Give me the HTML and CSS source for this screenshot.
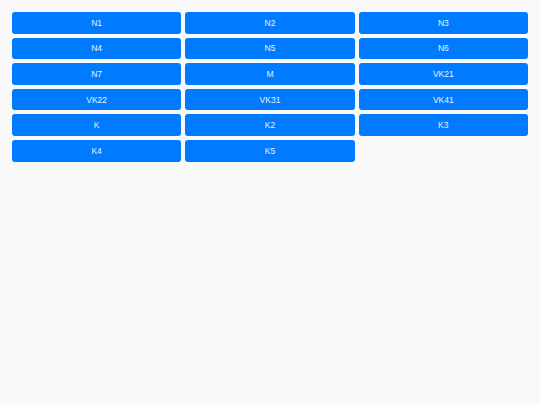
FILE: index.html
```html
<!DOCTYPE html>
<html>
<head>
<meta charset="utf-8">
<link rel="stylesheet" href="styles.css">
</head>
<body>
<div class="grid">
  <button class="btn">N1</button>
  <button class="btn">N2</button>
  <button class="btn">N3</button>
  <button class="btn">N4</button>
  <button class="btn">N5</button>
  <button class="btn">N6</button>
  <button class="btn">N7</button>
  <button class="btn">M</button>
  <button class="btn">VK21</button>
  <button class="btn">VK22</button>
  <button class="btn">VK31</button>
  <button class="btn">VK41</button>
  <button class="btn">K</button>
  <button class="btn">K2</button>
  <button class="btn">K3</button>
  <button class="btn">K4</button>
  <button class="btn">K5</button>
</div>
</body>
</html>
```
FILE: styles.css
```css
html, body {
  margin: 0;
  padding: 0;
  background: #f9f9f9;
  font-family: "Liberation Sans", Arial, sans-serif;
}
.grid {
  display: grid;
  grid-template-columns: repeat(3, 1fr);
  gap: 4px;
  padding: 12px;
}
.btn {
  height: 21.6px;
  border: none;
  border-radius: 3px;
  background: #007bff;
  color: #e8f2ff;
  font-family: "Liberation Sans", Arial, sans-serif;
  font-size: 8.5px;
  padding: 0;
  margin: 0;
}
```
